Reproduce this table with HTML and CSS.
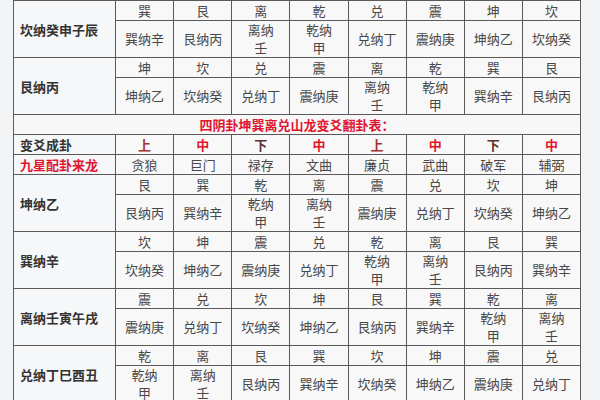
FILE: index.html
```html
<!DOCTYPE html>
<html lang="zh">
<head>
<meta charset="utf-8">
<link rel="stylesheet" href="styles.css">
</head>
<body>
<table class="gua">
<colgroup>
<col class="c-label"><col><col><col><col><col><col><col><col>
</colgroup>
<tbody>
<tr><td class="label" rowspan="2">坎纳癸申子辰</td><td>巽</td><td>艮</td><td>离</td><td>乾</td><td>兑</td><td>震</td><td>坤</td><td>坎</td></tr>
<tr class="na"><td>巽纳辛</td><td>艮纳丙</td><td>离纳<br>壬</td><td>乾纳<br>甲</td><td>兑纳丁</td><td>震纳庚</td><td>坤纳乙</td><td>坎纳癸</td></tr>
<tr><td class="label" rowspan="2">艮纳丙</td><td>坤</td><td>坎</td><td>兑</td><td>震</td><td>离</td><td>乾</td><td>巽</td><td>艮</td></tr>
<tr class="na"><td>坤纳乙</td><td>坎纳癸</td><td>兑纳丁</td><td>震纳庚</td><td>离纳<br>壬</td><td>乾纳<br>甲</td><td>巽纳辛</td><td>艮纳丙</td></tr>
<tr><td class="title" colspan="9">四阴卦坤巽离兑山龙变爻翻卦表：</td></tr>
<tr class="yao"><td class="label">变爻成卦</td><td class="shang">上</td><td class="zhong">中</td><td class="xia">下</td><td class="zhong">中</td><td class="shang">上</td><td class="zhong">中</td><td class="xia">下</td><td class="zhong">中</td></tr>
<tr><td class="label red">九星配卦来龙</td><td>贪狼</td><td>巨门</td><td>禄存</td><td>文曲</td><td>廉贞</td><td>武曲</td><td>破军</td><td>辅弼</td></tr>
<tr><td class="label" rowspan="2">坤纳乙</td><td>艮</td><td>巽</td><td>乾</td><td>离</td><td>震</td><td>兑</td><td>坎</td><td>坤</td></tr>
<tr class="na"><td>艮纳丙</td><td>巽纳辛</td><td>乾纳<br>甲</td><td>离纳<br>壬</td><td>震纳庚</td><td>兑纳丁</td><td>坎纳癸</td><td>坤纳乙</td></tr>
<tr><td class="label" rowspan="2">巽纳辛</td><td>坎</td><td>坤</td><td>震</td><td>兑</td><td>乾</td><td>离</td><td>艮</td><td>巽</td></tr>
<tr class="na"><td>坎纳癸</td><td>坤纳乙</td><td>震纳庚</td><td>兑纳丁</td><td>乾纳<br>甲</td><td>离纳<br>壬</td><td>艮纳丙</td><td>巽纳辛</td></tr>
<tr><td class="label" rowspan="2">离纳壬寅午戌</td><td>震</td><td>兑</td><td>坎</td><td>坤</td><td>艮</td><td>巽</td><td>乾</td><td>离</td></tr>
<tr class="na"><td>震纳庚</td><td>兑纳丁</td><td>坎纳癸</td><td>坤纳乙</td><td>艮纳丙</td><td>巽纳辛</td><td>乾纳<br>甲</td><td>离纳<br>壬</td></tr>
<tr><td class="label" rowspan="2">兑纳丁巳酉丑</td><td>乾</td><td>离</td><td>艮</td><td>巽</td><td>坎</td><td>坤</td><td>震</td><td>兑</td></tr>
<tr class="na"><td>乾纳<br>甲</td><td>离纳<br>壬</td><td>艮纳丙</td><td>巽纳辛</td><td>坎纳癸</td><td>坤纳乙</td><td>震纳庚</td><td>兑纳丁</td></tr>
</tbody>
</table>
</body>
</html>
```
FILE: styles.css
```css
html, body {
  margin: 0;
  padding: 0;
  background: #f3f4f6;
  height: 400px;
  overflow: hidden;
}
body {
  font-family: "Noto Sans CJK SC", "Noto Sans", sans-serif;
}
.gua {
  border-collapse: collapse;
  table-layout: fixed;
  width: 568px;
  margin: 0 0 0 13px;
  background: #f8f8f8;
}
.c-label {
  width: 102px;
}
.gua td {
  border: 1px solid #5a5a5a;
  padding: 1px 0;
  line-height: 17px;
  font-size: 13px;
  color: #484848;
  text-align: center;
  vertical-align: middle;
  white-space: nowrap;
}
.gua .na td {
  line-height: 18px;
  padding: 0;
}
.gua td.label {
  text-align: left;
  padding: 0 0 0 6px;
  font-weight: 700;
  color: #333;
  background: #f6f7f8;
}
.gua td.label.red {
  color: #e01530;
}
.gua td.title {
  color: #e01530;
  font-weight: 700;
  background: #f7f7f7;
}
.yao td {
  font-weight: 700;
}
.yao td.shang {
  color: #a2302e;
}
.yao td.zhong {
  color: #e4142c;
}
.yao td.xia {
  color: #5a3030;
}
```
